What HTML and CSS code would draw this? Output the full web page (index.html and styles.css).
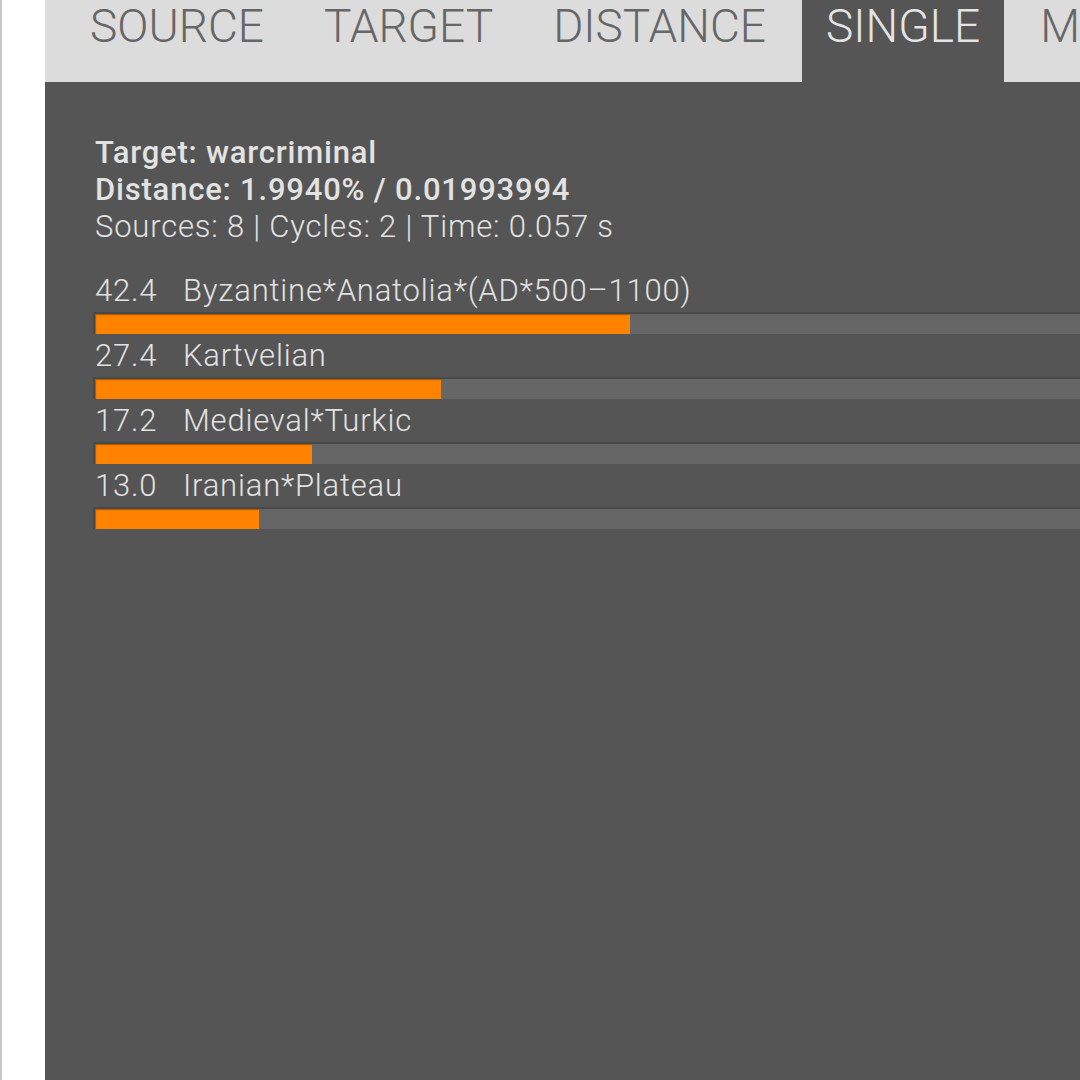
FILE: index.html
```html
<!DOCTYPE html>
<html lang="en">
<head>
  <meta charset="UTF-8">
  <title>Single</title>
  <link rel="stylesheet" href="styles.css">
</head>
<body>
  <div class="page">
    <nav class="tabs">
      <span class="tab">Source</span>
      <span class="tab">Target</span>
      <span class="tab">Distance</span>
      <span class="tab active">Single</span>
      <span class="tab">Multi</span>
    </nav>
    <main class="panel">
      <div class="summary">
        <div class="strong">Target: warcriminal</div>
        <div class="strong">Distance: 1.9940% / 0.01993994</div>
        <div>Sources: 8 | Cycles: 2 | Time: 0.057 s</div>
      </div>
      <div class="results">
        <div class="row">
          <div class="label"><span class="pct">42.4</span><span>Byzantine*Anatolia*(AD*500–1100)</span></div>
          <div class="track"><div class="fill" style="width: 42.4%"></div></div>
        </div>
        <div class="row">
          <div class="label"><span class="pct">27.4</span><span>Kartvelian</span></div>
          <div class="track"><div class="fill" style="width: 27.4%"></div></div>
        </div>
        <div class="row">
          <div class="label"><span class="pct">17.2</span><span>Medieval*Turkic</span></div>
          <div class="track"><div class="fill" style="width: 17.2%"></div></div>
        </div>
        <div class="row">
          <div class="label"><span class="pct">13.0</span><span>Iranian*Plateau</span></div>
          <div class="track"><div class="fill" style="width: 13.0%"></div></div>
        </div>
      </div>
    </main>
  </div>
</body>
</html>
```

FILE: styles.css
```css
html, body {
  height: 100%;
  margin: 0;
}
body {
  background: #fff;
  border-left: 2px solid #c4c4c4;
  box-sizing: border-box;
  overflow: hidden;
  font-family: Roboto, "Liberation Sans", sans-serif;
}
.page {
  display: flex;
  flex-direction: column;
  height: 100%;
  margin-left: 43px;
  width: 1300px;
}
.tabs {
  display: flex;
  height: 82px;
  padding-left: 21px;
  background: #dcdcdc;
  flex-shrink: 0;
}
.tab {
  padding: 0 24px;
  margin-right: 12px;
  font-size: 46px;
  font-weight: 300;
  line-height: 52px;
  text-transform: uppercase;
  color: #666;
}
.tab.active {
  background: #555;
  color: #e4e4e4;
}
.panel {
  flex: 1;
  background: #555;
  padding: 52px 50px;
  color: #e2e2e2;
  font-size: 31px;
  font-weight: 300;
  line-height: 37px;
  letter-spacing: 0.8px;
}
.strong {
  font-weight: 500;
}
.results {
  margin-top: 27px;
}
.row {
  padding-bottom: 3px;
}
.label {
  display: flex;
}
.pct {
  width: 88px;
}
.track {
  margin: 3px 0 0 -2px;
  height: 20px;
  background: #666;
  border-top: 2px solid #484848;
  border-left: 2px solid #484848;
  width: 1262px;
}
.fill {
  height: 100%;
  background: #ff8200;
  box-shadow: inset 1px 1px 1px rgba(90, 40, 0, 0.5);
}
```
